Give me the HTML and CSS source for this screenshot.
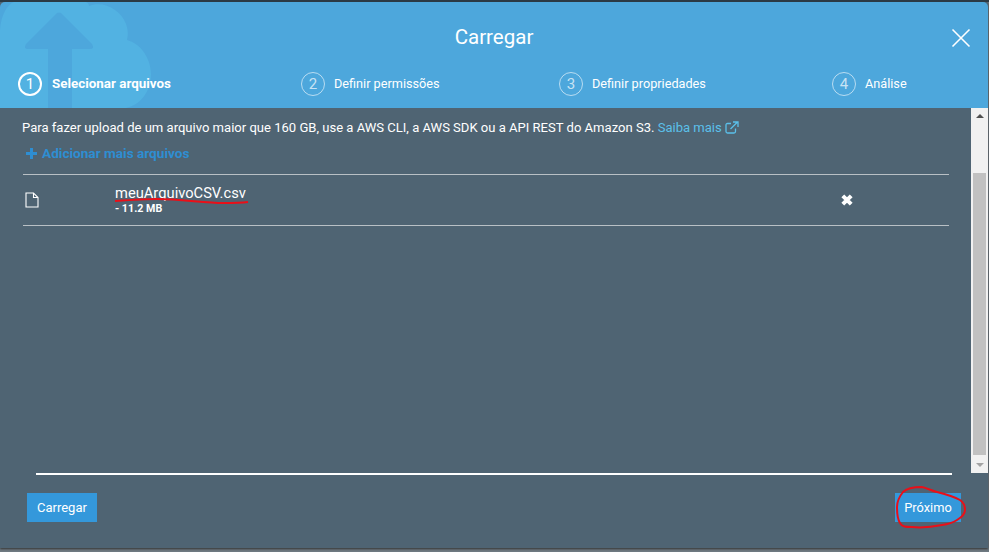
FILE: index.html
```html
<!DOCTYPE html>
<html lang="pt">
<head>
<meta charset="utf-8">
<title>Carregar</title>
<link rel="stylesheet" href="styles.css">
</head>
<body>
<div class="modal">
  <header class="head">
    <svg class="cloud" width="160" height="106" viewBox="0 0 160 106">
      <path class="cloud-shape" d="M0 106V28C1 12 8 2 14 0H86C88 1 89 2 89 4C97 1 107 2 115 8C125 15 130 27 127 38C142 42 151 58 151 72C151 90 140 103 126 106Z"/>
      <path class="cloud-arrow" d="M57 11Q59 10 61 11L92 42Q95 47 90 47H72V106H48V47H28Q23 47 26 42Z"/>
    </svg>
    <button class="close" aria-label="Fechar">
      <svg width="20" height="20" viewBox="0 0 20 20"><path d="M1.500 1.500L18.500 18.500M18.500 1.500L1.500 18.500"/></svg>
    </button>
    <h1 class="title">Carregar</h1>
    <ol class="steps">
      <li class="step active"><span class="num">1</span><span>Selecionar arquivos</span></li>
      <li class="step"><span class="num">2</span><span>Definir permissões</span></li>
      <li class="step"><span class="num">3</span><span>Definir propriedades</span></li>
      <li class="step"><span class="num">4</span><span>Análise</span></li>
    </ol>
  </header>
  <div class="middle">
    <main class="content">
      <p class="note">Para fazer upload de um arquivo maior que 160 GB, use a AWS CLI, a AWS SDK ou a API REST do Amazon S3. <a class="link">Saiba mais <svg class="ext" width="14" height="13" viewBox="0 0 14 13"><path d="M6 2.500H2.500Q1 2.500 1 4V10.500Q1 12 2.500 12H9Q10.500 12 10.500 10.500V7.500M5.500 8L12 1.500M8 1H13V6"/></svg></a></p>
      <div class="add"><svg class="plus" width="11" height="11" viewBox="0 0 11 11"><path d="M4 0H7V4H11V7H7V11H4V7H0V4H4Z"/></svg><span>Adicionar mais arquivos</span></div>
      <div class="file">
        <svg class="doc" width="14" height="16" viewBox="0 0 14 16"><path d="M1 1H8.500L13 5.500V15H1ZM8.500 1V5.500H13"/></svg>
        <div class="file-info">
          <div class="file-name">meuArquivoCSV.csv</div>
          <div class="file-size">- 11.2 MB</div>
        </div>
        <svg class="remove" width="14" height="14" viewBox="0 0 14 14"><path d="M2.800 2.800L11.200 11.200M11.200 2.800L2.800 11.200"/></svg>
      </div>
    </main>
    <div class="scrollbar">
      <span class="arrow up"></span>
      <div class="track"><div class="thumb"></div></div>
      <span class="arrow down"></span>
    </div>
  </div>
  <footer class="foot">
    <div class="actions">
      <button class="btn">Carregar</button>
      <button class="btn next">Próximo</button>
    </div>
  </footer>
</div>
<svg class="marks" width="989" height="552" viewBox="0 0 989 552">
  <path d="M115 201C130 200 145 199 157 199C180 199 205 203 223 203C232 203 240 203 248 202"/>
  <path d="M922 487C914 487 906 489 903 492C899 497 897 502 897 507C897 514 898 520 900 523C902 527 906 527 912 527C922 528 932 527 942 525C950 524 954 522 957 520C962 517 965 514 965 510C965 506 963 502 960 500C953 496 945 494 937 492C932 491 927 488 922 487"/>
</svg>
</body>
</html>
```
FILE: styles.css
```css
* { box-sizing: border-box; }
html, body { margin: 0; height: 100%; }
body {
  width: 989px;
  height: 552px;
  overflow: hidden;
  background: #6f7a82;
  font-family: Roboto, "Liberation Sans", sans-serif;
  color: #fff;
  position: relative;
  padding-top: 2px;
}
body::before {
  content: "";
  position: absolute;
  left: 0; top: 0; right: 0;
  height: 2px;
  background: #2b3a45;
}
.modal {
  width: 988px;
  height: 546px;
  display: flex;
  flex-direction: column;
  background: #4f6473;
  box-shadow: 0 1px 2px #333;
}
.head {
  position: relative;
  height: 106px;
  flex: none;
  background: #4da7dc;
  border-radius: 5px 5px 0 0;
  overflow: hidden;
}
.cloud { position: absolute; left: 0; top: 0; }
.cloud-shape { fill: #52b2e2; }
.cloud-arrow { fill: #4da7dc; }
.close {
  position: absolute;
  right: 17px;
  top: 26px;
  padding: 0;
  border: 0;
  background: none;
  line-height: 0;
}
.close path { stroke: #fff; stroke-width: 1.600; fill: none; }
.title {
  position: relative;
  margin: 0;
  padding-top: 22px;
  text-align: center;
  font-size: 20.500px;
  line-height: 26px;
  font-weight: 400;
}
.steps {
  list-style: none;
  margin: 0;
  padding: 0 0 0 18px;
  position: absolute;
  left: 0; top: 70px;
  display: grid;
  grid-template-columns: 283px 258px 273px auto;
}
.step {
  display: flex;
  align-items: center;
  gap: 9px;
  font-size: 12.700px;
  line-height: 24px;
}
.num {
  width: 24px;
  height: 24px;
  border-radius: 50%;
  border: 1px solid rgba(255,255,255,.6);
  text-align: center;
  font-size: 15px;
  line-height: 23px;
  color: rgba(255,255,255,.7);
}
.active { font-weight: 700; font-size: 13.400px; gap: 10px; }
.active .num { border: 2px solid #fff; line-height: 21px; color: #fff; font-weight: 400; font-size: 15px; }
.middle { flex: none; height: 365px; display: flex; }
.content { flex: 1; padding: 0 22px 0 23px; min-width: 0; }
.note { margin: 12px 0 0 -1px; font-size: 13.060px; line-height: 15px; white-space: nowrap; }
.link { color: #5bc0ea; }
.ext { vertical-align: -2px; }
.ext path { fill: none; stroke: #5bc0ea; stroke-width: 1.300; }
.add {
  margin: 10px 0 0 3px;
  display: flex;
  align-items: center;
  gap: 5px;
  color: #2e8ed2;
  font-size: 13.600px;
  font-weight: 700;
  line-height: 16px;
}
.plus path { fill: #2e8ed2; }
.file {
  margin-top: 13px;
  height: 52px;
  border-top: 1px solid #b9c0c5;
  border-bottom: 1px solid #b9c0c5;
  display: flex;
  align-items: center;
  padding-left: 2px;
}
.doc { flex: none; }
.doc path { fill: none; stroke: #fff; stroke-width: 1.100; }
.file-info { margin-left: 76px; width: 725px; margin-top: -1px; }
.file-name { font-size: 14.700px; line-height: 17px; }
.file-size { font-size: 10.700px; font-weight: 700; line-height: 12px; margin-top: 1px; }
.remove path { stroke: #fff; stroke-width: 4; fill: none; }
.scrollbar {
  flex: none;
  width: 17px;
  background: #f1f1f1;
  display: flex;
  flex-direction: column;
  align-items: center;
}
.track { flex: 1; width: 100%; padding: 49px 2px 0; }
.thumb { height: 282px; background: #c1c1c1; }
.arrow { flex: none; width: 0; height: 0; border-left: 4px solid transparent; border-right: 4px solid transparent; margin: 6px 0; }
.up { border-bottom: 4px solid #505050; }
.down { border-top: 4px solid #a3a3a3; }
.foot { flex: 1; padding: 0 36px; }
.actions {
  border-top: 2px solid #fff;
  padding-top: 18px;
  display: flex;
  justify-content: space-between;
}
.btn {
  height: 29px;
  padding: 0 10px;
  border: 0;
  background: #3498db;
  color: #fff;
  font-family: inherit;
  font-size: 13px;
  margin-left: -9px;
}
.next { width: 66px; padding: 0; margin-left: 0; margin-right: -9px; font-size: 12.800px; }
.marks { position: absolute; left: 0; top: 0; pointer-events: none; }
.marks path { fill: none; stroke: #ea0f18; stroke-width: 2; }
```
